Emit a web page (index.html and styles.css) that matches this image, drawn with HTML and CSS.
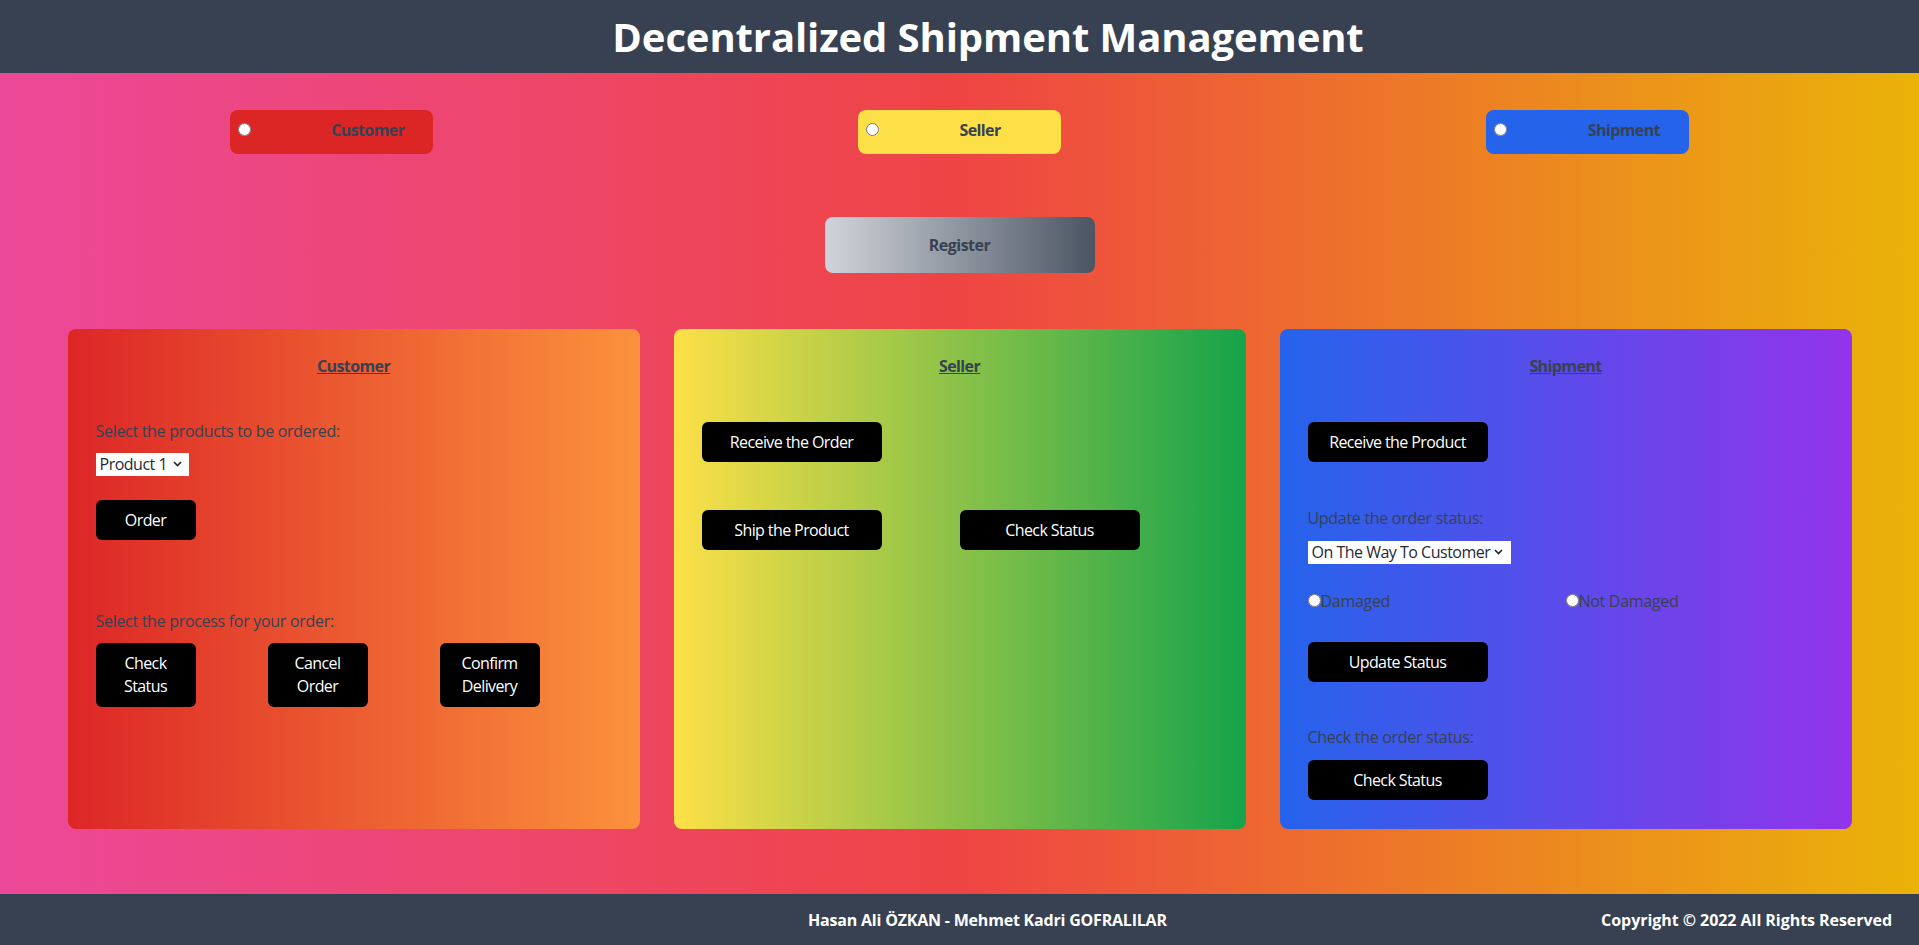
FILE: index.html
```html
<!DOCTYPE html>
<html lang="en">
<head>
<meta charset="utf-8">
<title>Decentralized Shipment Management</title>
<link rel="stylesheet" href="styles.css">
</head>
<body>
<header class="topbar">
  <h1 class="title">Decentralized Shipment Management</h1>
</header>
<main class="main">
  <div class="roles">
    <div class="role-cell">
      <label class="role role-customer"><input type="radio" name="role" class="role-radio"><span class="role-text">Customer</span></label>
    </div>
    <div class="role-cell">
      <label class="role role-seller"><input type="radio" name="role" class="role-radio"><span class="role-text">Seller</span></label>
    </div>
    <div class="role-cell">
      <label class="role role-shipment"><input type="radio" name="role" class="role-radio"><span class="role-text">Shipment</span></label>
    </div>
  </div>

  <div class="register-row">
    <button class="register" type="button">Register</button>
  </div>

  <div class="cards">
    <section class="card card-customer">
      <h2 class="card-title">Customer</h2>
      <p class="label label-first">Select the products to be ordered:</p>
      <span class="select-wrap sel-product">
        <select class="select"><option>Product 1</option><option>Product 2</option><option>Product 3</option></select>
        <svg class="chev" width="9" height="6" viewBox="0 0 9 6"><path d="M1 1l3.5 3.5L8 1" fill="none" stroke="#222" stroke-width="1.6"/></svg>
      </span>
      <button class="btn btn-narrow btn-order" type="button">Order</button>
      <p class="label label-process">Select the process for your order:</p>
      <div class="grid3">
        <div><button class="btn btn-narrow btn-two" type="button">Check Status</button></div>
        <div><button class="btn btn-narrow btn-two" type="button">Cancel Order</button></div>
        <div><button class="btn btn-narrow btn-two" type="button">Confirm Delivery</button></div>
      </div>
    </section>

    <section class="card card-seller">
      <h2 class="card-title">Seller</h2>
      <button class="btn btn-wide btn-first" type="button">Receive the Order</button>
      <div class="grid2 seller-row">
        <div><button class="btn btn-wide" type="button">Ship the Product</button></div>
        <div><button class="btn btn-wide" type="button">Check Status</button></div>
      </div>
    </section>

    <section class="card card-shipment">
      <h2 class="card-title">Shipment</h2>
      <button class="btn btn-wide btn-first" type="button">Receive the Product</button>
      <p class="label label-update">Update the order status:</p>
      <span class="select-wrap sel-status">
        <select class="select"><option>On The Way To Customer</option><option>Delivered</option></select>
        <svg class="chev" width="9" height="6" viewBox="0 0 9 6"><path d="M1 1l3.5 3.5L8 1" fill="none" stroke="#222" stroke-width="1.6"/></svg>
      </span>
      <div class="grid2 damage-row">
        <label class="radio-label"><input type="radio" name="damage" class="radio">Damaged</label>
        <label class="radio-label"><input type="radio" name="damage" class="radio">Not Damaged</label>
      </div>
      <button class="btn btn-wide btn-update" type="button">Update Status</button>
      <p class="label label-check">Check the order status:</p>
      <button class="btn btn-wide btn-check" type="button">Check Status</button>
    </section>
  </div>
</main>
<footer class="footer">
  <span class="footer-names">Hasan Ali ÖZKAN - Mehmet Kadri GOFRALILAR</span>
  <span class="footer-copy">Copyright © 2022 All Rights Reserved</span>
</footer>
</body>
</html>
```

FILE: styles.css
```css
* { box-sizing: border-box; }
html, body { margin: 0; padding: 0; }
body {
  font-family: "Open Sans", "Noto Sans", sans-serif;
  font-size: 16px;
  line-height: 24px;
  letter-spacing: -0.3px;
  color: #374151;
  display: flex;
  flex-direction: column;
  min-height: 100vh;
}

.topbar {
  background: #374151;
  height: 73px;
  display: flex;
  align-items: center;
  justify-content: center;
  padding-left: 57px;
  flex-shrink: 0;
}
.title {
  margin: 0;
  color: #fff;
  font-size: 40px;
  font-weight: 700;
  line-height: 48px;
  letter-spacing: -0.1px;
}

.main {
  flex: 1;
  background: linear-gradient(to right, #ec4899, #ef4444, #eab308);
  padding-top: 37px;
}

.roles {
  display: grid;
  grid-template-columns: repeat(3, 1fr);
  padding: 0 17px;
}
.role-cell { display: flex; justify-content: center; }
.role {
  width: 203px;
  height: 44px;
  border-radius: 8px;
  display: grid;
  grid-template-columns: 1fr 1fr;
  align-items: start;
  font-weight: 700;
  letter-spacing: -0.6px;
  color: #374151;
}
.role-radio {
  margin: 13px 0 0 8px;
  width: 13px;
  height: 13px;
}
.role-text { margin-top: 8px; }
.role-customer { background: #dc2626; }
.role-seller { background: #fde047; }
.role-shipment { background: #2563eb; }

.register-row {
  display: flex;
  justify-content: center;
  margin-top: 63px;
}
.register {
  width: 270px;
  height: 56px;
  border: 0;
  border-radius: 8px;
  background: linear-gradient(to right, #d1d5db, #4b5563);
  font: inherit;
  font-weight: 700;
  letter-spacing: -0.5px;
  color: #374151;
}

.cards {
  display: grid;
  grid-template-columns: repeat(3, 572px);
  gap: 34px;
  justify-content: center;
  margin-top: 56px;
}
.card {
  height: 500px;
  border-radius: 8px;
  padding: 25px 28px;
}
.card-customer { background: linear-gradient(to right, #dc2626, #fb923c); }
.card-seller { background: linear-gradient(to right, #fde047, #16a34a); }
.card-shipment { background: linear-gradient(to right, #2563eb, #9333ea); }

.card-title {
  margin: 0;
  text-align: center;
  font-size: 16px;
  line-height: 24px;
  font-weight: 700;
  letter-spacing: -0.6px;
  text-decoration: underline;
  color: #374151;
}

.label { margin: 0; }
.label-first { margin-top: 41px; }
.label-process { margin-top: 69px; }
.label-update { margin-top: 44px; }
.label-check { margin-top: 43px; }

.select-wrap {
  position: relative;
  display: block;
  height: 23px;
  margin-top: 10px;
}
.sel-status { margin-top: 11px; }
.select {
  appearance: none;
  -webkit-appearance: none;
  border: 0;
  border-radius: 0;
  background: #fff;
  font-family: inherit;
  font-size: 16px;
  letter-spacing: -0.5px;
  line-height: 23px;
  height: 23px;
  padding: 0 20px 0 4px;
  color: #1f2937;
  display: block;
}
.sel-product .select { width: 93px; }
.sel-status .select { width: 203px; }
.chev {
  position: absolute;
  top: 8px;
  pointer-events: none;
}
.sel-product .chev { left: 77px; }
.sel-status .chev { left: 186px; }

.btn {
  display: block;
  border: 0;
  border-radius: 6px;
  background: #000;
  color: #fff;
  font: inherit;
  font-size: 16px;
  line-height: 24px;
  letter-spacing: -0.6px;
  padding: 8px 10px;
  text-align: center;
}
.btn-narrow { width: 100px; padding-left: 16px; padding-right: 16px; }
.btn-wide { width: 180px; }
.btn-order { margin-top: 24px; }
.btn-two { line-height: 23px; padding-top: 9px; padding-bottom: 9px; }
.btn-first { margin-top: 44px; }
.btn-update { margin-top: 29px; }
.btn-check { margin-top: 11px; }

.grid3 {
  display: grid;
  grid-template-columns: repeat(3, 1fr);
  margin-top: 10px;
}
.grid2 {
  display: grid;
  grid-template-columns: repeat(2, 1fr);
}
.seller-row { margin-top: 48px; }
.damage-row { margin-top: 25px; }
.radio-label { display: block; }
.radio { margin: 0; width: 13px; height: 13px; }

.footer {
  background: #374151;
  height: 51px;
  flex-shrink: 0;
  display: flex;
  align-items: center;
  color: #fff;
  font-weight: 700;
  letter-spacing: -0.2px;
  padding: 0 27px 0 0;
}
.footer-names { margin-left: 808px; }
.footer-copy { margin-left: auto; letter-spacing: -0.05px; }
```
